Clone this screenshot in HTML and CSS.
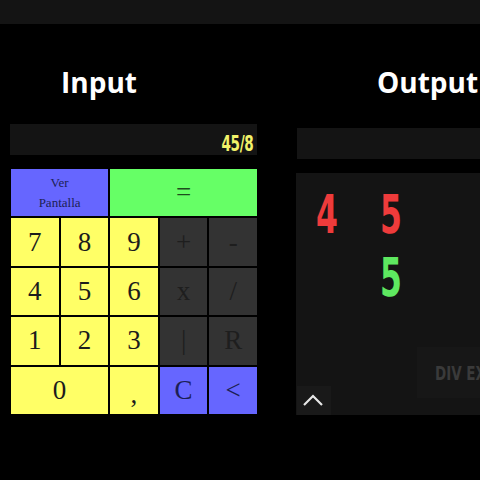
FILE: index.html
```html
<!DOCTYPE html>
<html>
<head>
<meta charset="utf-8">
<link rel="stylesheet" href="styles.css">
</head>
<body>
<div class="topbar"></div>
<div class="cols">
  <section class="col-in">
    <h2 class="title title-in">Input</h2>
    <div class="display"><span class="disp-text">45/8</span></div>
    <div class="keypad">
      <div class="key blue span2 small">Ver<br>Pantalla</div>
      <div class="key green span3">=</div>
      <div class="key yellow">7</div>
      <div class="key yellow">8</div>
      <div class="key yellow">9</div>
      <div class="key dark">+</div>
      <div class="key dark">-</div>
      <div class="key yellow">4</div>
      <div class="key yellow">5</div>
      <div class="key yellow">6</div>
      <div class="key dark">x</div>
      <div class="key dark">/</div>
      <div class="key yellow">1</div>
      <div class="key yellow">2</div>
      <div class="key yellow">3</div>
      <div class="key dark">|</div>
      <div class="key dark">R</div>
      <div class="key yellow span2">0</div>
      <div class="key yellow comma">,</div>
      <div class="key blue">C</div>
      <div class="key blue">&lt;</div>
    </div>
  </section>
  <section class="col-out">
    <h2 class="title title-out">Output</h2>
    <div class="display out-display"></div>
    <div class="panel">
      <div class="digits">
        <span class="dg red">4</span>
        <span class="dg red">5</span>
        <span class="dg"></span>
        <span class="dg green">5</span>
      </div>
      <div class="ghost"><span>DIV EX</span></div>
      <div class="totop">
        <svg width="22" height="14" viewBox="0 0 22 14"><polyline points="2,12 11,3 20,12" fill="none" stroke="#e6e6e6" stroke-width="2.2"/></svg>
      </div>
    </div>
  </section>
</div>
</body>
</html>
```
FILE: styles.css
```css
html, body {
  margin: 0;
  padding: 0;
  background: #000;
  width: 480px;
  height: 480px;
  overflow: hidden;
}
.topbar {
  height: 24px;
  background: #141414;
}
.cols {
  display: flex;
}
.col-in {
  width: 247px;
  flex-shrink: 0;
  margin-left: 10px;
  display: flex;
  flex-direction: column;
}
.col-out {
  margin-left: 39px;
  width: 260px;
  flex-shrink: 0;
  display: flex;
  flex-direction: column;
}
.title {
  margin: 38px 0 0 0;
  height: 40px;
  line-height: 40px;
  font-family: "Open Sans", sans-serif;
  font-weight: 700;
  font-size: 28px;
  color: #fff;
}
.title-in {
  padding-left: 51px;
}
.title-out {
  padding-left: 81px;
}
.display {
  height: 31px;
  background: #141414;
  margin-top: 22px;
  display: flex;
  justify-content: flex-end;
  align-items: flex-end;
}
.out-display {
  margin-top: 26px;
  margin-left: 1px;
}
.disp-text {
  font-family: "DejaVu Sans Condensed", "DejaVu Sans", sans-serif;
  font-weight: 700;
  font-size: 21px;
  line-height: 21px;
  color: #f2f26a;
  margin-right: 4px;
  display: inline-block;
  transform: scaleX(0.72);
  transform-origin: right bottom;
  letter-spacing: -0.5px;
}
.keypad {
  margin-top: 14px;
  margin-left: 1px;
  display: grid;
  grid-template-columns: repeat(5, 1fr);
  grid-template-rows: repeat(5, 47.4px);
  gap: 2px;
}
.key {
  display: flex;
  align-items: center;
  justify-content: center;
  text-align: center;
  font-family: "Liberation Serif", serif;
  font-size: 27px;
  color: #1c1c1c;
}
.span2 { grid-column: span 2; }
.span3 { grid-column: span 3; }
.small {
  font-size: 13px;
  line-height: 20px;
  color: #222a66;
}
.blue { background: #6666ff; color: #1c1f55; }
.green { background: #66ff66; color: #1d4d1d; }
.yellow { background: #ffff66; }
.dark { background: #333333; color: #1e1e1e; }
.comma { padding-top: 8px; box-sizing: border-box; }
.panel {
  margin-top: 14px;
  height: 242px;
  background: #141414;
  position: relative;
}
.digits {
  display: grid;
  grid-template-columns: 64px 64px;
  grid-auto-rows: 63px;
  padding: 10px 0 0 20px;
}
.dg {
  font-family: "DejaVu Sans Condensed", "DejaVu Sans", sans-serif;
  font-weight: 700;
  font-size: 53px;
  line-height: 63px;
  display: inline-block;
  transform: scaleX(0.66);
  transform-origin: left center;
}
.red { color: #ee3b3b; }
.green.dg { color: #5ee860; background: none; }
.ghost {
  position: absolute;
  left: 121px;
  top: 174px;
  width: 80px;
  height: 51px;
  background: #171717;
  display: flex;
  align-items: center;
  padding-left: 18px;
  box-sizing: border-box;
}
.ghost span {
  font-family: "DejaVu Sans Condensed", "DejaVu Sans", sans-serif;
  font-weight: 700;
  font-size: 20px;
  color: #3a3a3a;
  white-space: nowrap;
  display: inline-block;
  transform: scaleX(0.75);
  transform-origin: left center;
}
.totop {
  position: absolute;
  left: 1px;
  bottom: 0;
  width: 34px;
  height: 29px;
  background: #191919;
  display: flex;
  align-items: center;
  justify-content: center;
}
.totop svg { display: block; margin-left: -2px; margin-top: -2px; }
```
